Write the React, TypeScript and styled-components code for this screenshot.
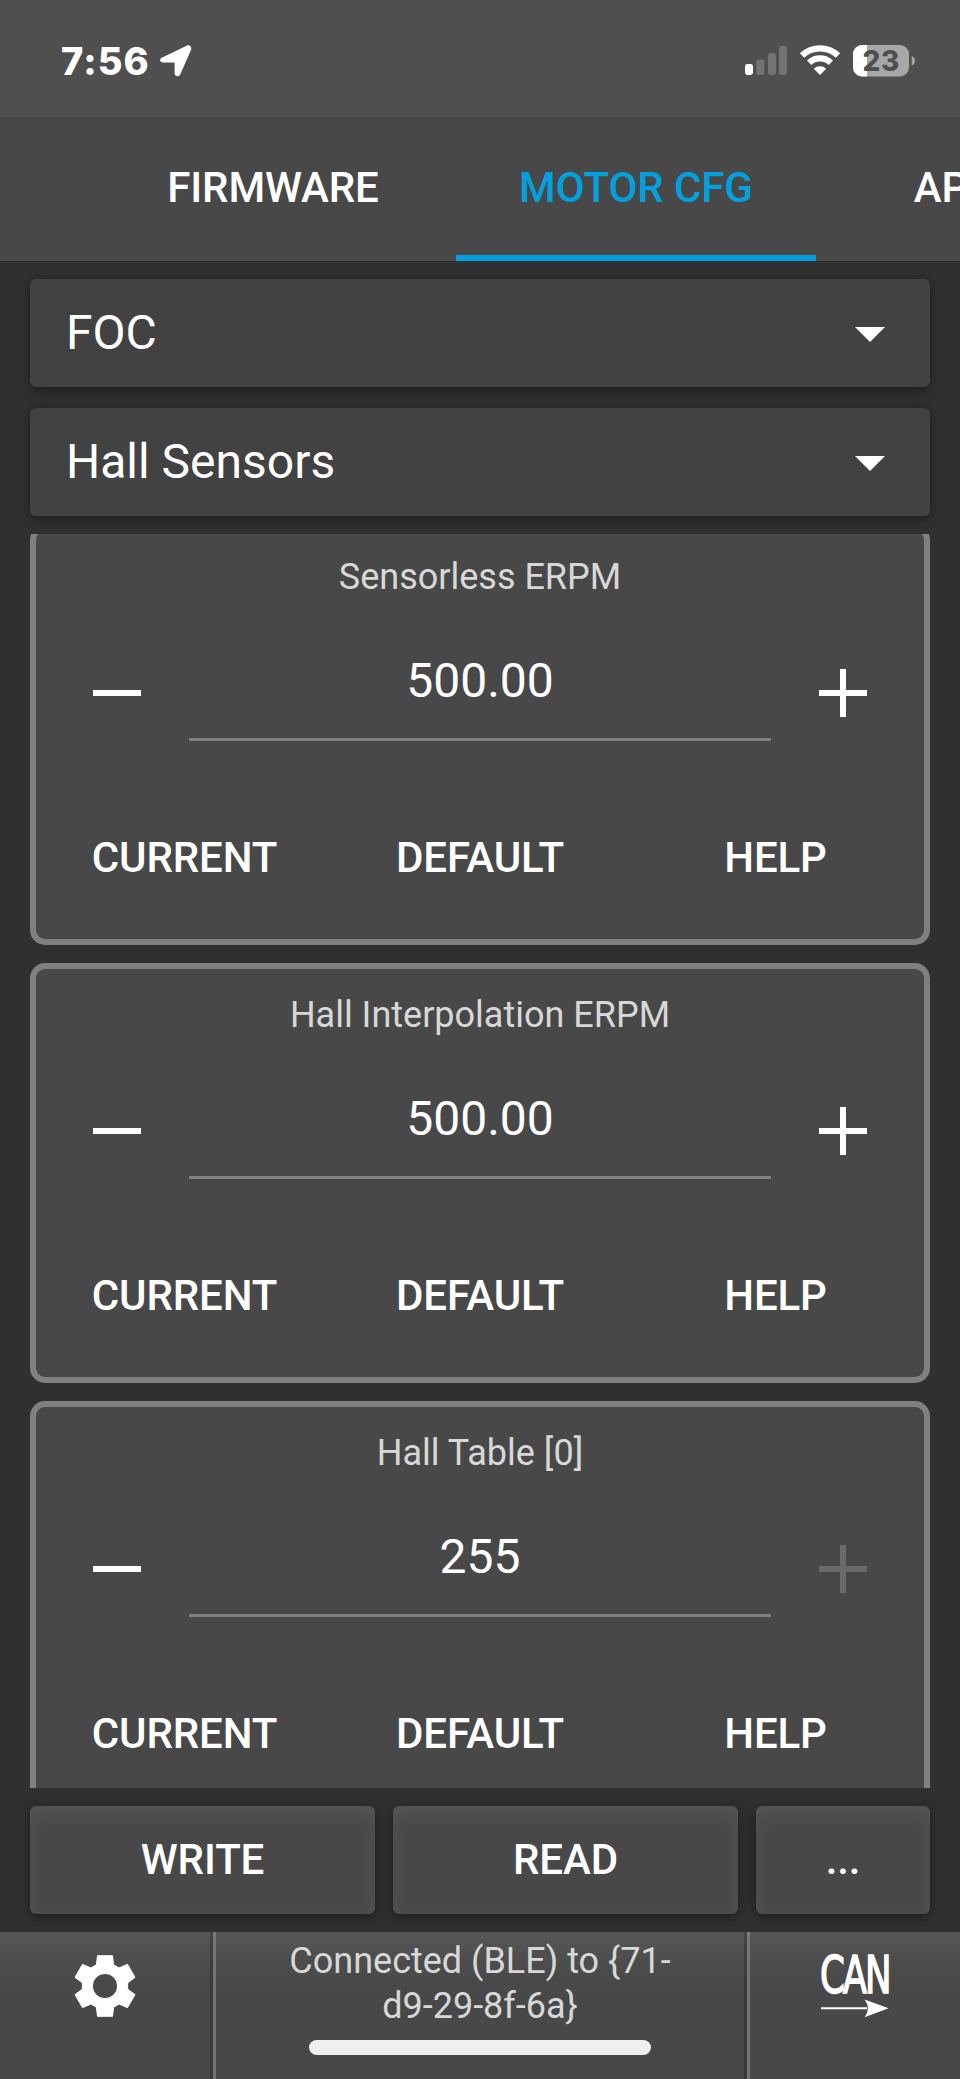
import React from "react";
import styled, { createGlobalStyle, css } from "styled-components";

const Global = createGlobalStyle`
  * { box-sizing: border-box; }
  html, body { margin: 0; padding: 0; background: #303030; }
  button { font: inherit; color: inherit; border: 0; background: none; padding: 0; margin: 0; }
`;

const Screen = styled.div`
  width: 960px;
  height: 2079px;
  display: flex;
  flex-direction: column;
  overflow: hidden;
  background: #303030;
  color: #fff;
  font-family: Roboto, "Liberation Sans", sans-serif;
`;

const StatusBar = styled.header`
  flex: none;
  height: 117px;
  display: flex;
  align-items: flex-start;
  justify-content: space-between;
  background: #4f4f4f;
  padding: 42px 44px 0 61px;
`;

const StatusLeft = styled.div`
  display: flex;
  align-items: flex-start;
  gap: 10px;
`;

const Clock = styled.span`
  font: 800 38px/38px Inter, sans-serif;
  letter-spacing: 1.1px;
`;

const StatusRight = styled.div`
  display: flex;
  align-items: flex-start;
  gap: 13px;
  padding-top: 3px;
`;

const Tabs = styled.nav`
  flex: none;
  height: 144px;
  display: flex;
  gap: 3px;
  padding-left: 93px;
  background: #484848;
`;

const Tab = styled.button<{ $active?: boolean }>`
  flex: none;
  width: 360px;
  height: 144px;
  font-weight: 500;
  font-size: 42px;
  line-height: 49px;
  letter-spacing: -0.1px;
  padding-bottom: 3px;
  white-space: nowrap;
  ${(p) =>
    p.$active &&
    css`
      color: #03a0df;
      border-bottom: 6px solid #03a0df;
      padding-top: 6px;
    `}
`;

const Selects = styled.section`
  flex: none;
  display: flex;
  flex-direction: column;
  gap: 21px;
  padding: 18px 30px;
`;

const Select = styled.button`
  height: 108px;
  display: flex;
  align-items: center;
  justify-content: space-between;
  padding: 0 45px 0 36px;
  border-radius: 6px;
  background: #424242;
  box-shadow: 0 4px 9px rgba(0, 0, 0, 0.28), 0 0 16px rgba(0, 0, 0, 0.16);
  font-size: 48px;
  line-height: 56px;
`;

const List = styled.main`
  flex: none;
  height: 1254px;
  overflow: hidden;
  padding: 0 30px;
`;

const ListTrack = styled.div`
  margin-top: -9px;
  display: flex;
  flex-direction: column;
  gap: 18px;
`;

const Card = styled.article`
  flex: none;
  height: 420px;
  border: 6px solid #808080;
  border-radius: 15px;
  background: #484848;
  padding: 25px 57px 0;
`;

const CardTitle = styled.h2`
  margin: 0;
  font-weight: 400;
  font-size: 36px;
  line-height: 42px;
  text-align: center;
  color: #d8d8d8;
`;

const Spin = styled.div`
  display: flex;
  justify-content: space-between;
  height: 144px;
  margin-top: 23px;
`;

const StepButton = styled.button<{ $disabled?: boolean }>`
  width: 48px;
  height: 144px;
  display: flex;
  align-items: center;
  color: ${(p) => (p.$disabled ? "#6a6a6a" : "#fff")};
`;

const Value = styled.div`
  width: 582px;
  height: 120px;
  padding-top: 32px;
  border-bottom: 3px solid #808080;
  font-size: 48px;
  line-height: 56px;
  text-align: center;
`;

const Actions = styled.div`
  display: grid;
  grid-template-columns: repeat(3, 279px);
  column-gap: 16.5px;
  margin: 20px -48px 0;
  height: 144px;
`;

const Action = styled.button`
  font-weight: 500;
  font-size: 42px;
  line-height: 49px;
  letter-spacing: -0.1px;
`;

const BottomButtons = styled.section`
  flex: none;
  display: grid;
  grid-template-columns: 345px 345px 174px;
  gap: 18px;
  padding: 18px 30px;
`;

const BigButton = styled.button`
  height: 108px;
  border-radius: 6px;
  background: #484848;
  font-weight: 500;
  font-size: 42px;
  line-height: 49px;
  letter-spacing: -0.1px;
  padding-bottom: 1px;
  box-shadow:
    inset 0 7px 18px rgba(255, 255, 255, 0.08),
    0 4px 9px rgba(0, 0, 0, 0.28),
    0 0 16px rgba(0, 0, 0, 0.16);
`;

const Footer = styled.footer`
  position: relative;
  flex: none;
  height: 147px;
  display: grid;
  grid-template-columns: 216px 534px 210px;
  background: linear-gradient(#575757 0, #4e4e4e 24px, #494949 50px, #484848 75px);
`;

const FooterCell = styled.div<{ $divided?: boolean }>`
  display: flex;
  justify-content: center;
  ${(p) =>
    p.$divided &&
    css`
      border-right: 3px solid rgba(160, 160, 160, 0.48);
      box-shadow: inset -3px 0 0 rgba(0, 0, 0, 0.2);
      padding-right: 3px;
    `}
`;

const Connection = styled.p`
  margin: 7px 0 0;
  width: 410px;
  font-size: 36px;
  line-height: 45px;
  text-align: center;
  color: #d8d8d8;
`;

const HomeIndicator = styled.div`
  position: absolute;
  left: 309px;
  bottom: 24px;
  width: 342px;
  height: 15px;
  border-radius: 8px;
  background: #efefef;
`;

const Glyph = styled.svg<{ $top?: number }>`
  display: block;
  flex: none;
  overflow: visible;
  margin-top: ${(p) => p.$top ?? 0}px;
`;

const LocationIcon = () => (
  <Glyph width="32" height="32" viewBox="0 0 32 32" $top={3}>
    <path
      d="M2.300 12.600 26.600.7c2.900-1.300 5.600 1.300 4.400 4.200L20.200 29.400c-1.200 2.700-5.600 2.300-5.600-1.200V18.400c0-.5-.3-.8-.8-.8H3.500c-4 0-4.500-3.800-1.200-5z"
      fill="#fff"
    />
  </Glyph>
);

const SignalIcon = () => (
  <Glyph width="42" height="29" viewBox="0 0 42 29" $top={1}>
    <rect x="0" y="18" width="8" height="11" rx="2.4" fill="#fff" />
    <rect x="11.3" y="13.5" width="8" height="15.5" rx="2.4" fill="#737373" />
    <rect x="23" y="7" width="8" height="22" rx="2.4" fill="#737373" />
    <rect x="34" y="0" width="8" height="29" rx="2.4" fill="#737373" />
  </Glyph>
);

const WifiIcon = () => (
  <Glyph width="40" height="30" viewBox="0 0 40 30">
    <g fill="none" stroke="#fff" strokeWidth="6.2">
      <path d="M2 10.6a26 26 0 0 1 36 0" />
      <path d="M9.1 17.7a16 16 0 0 1 21.8 0" />
    </g>
    <path d="M20 30l-6.200-6.200a9 9 0 0 1 12.400 0z" fill="#fff" />
  </Glyph>
);

const BatteryIcon = () => (
  <Glyph width="63" height="32" viewBox="0 0 63 32">
    <defs>
      <clipPath id="cell">
        <rect width="56" height="31.5" rx="9" />
      </clipPath>
    </defs>
    <g clipPath="url(#cell)">
      <rect width="56" height="32" fill="#a7a7a7" />
      <rect width="14" height="32" fill="#fff" />
    </g>
    <path d="M58.7 11c4.400 1.600 4.400 8 0 9.600z" fill="#a7a7a7" />
    <text
      x="28"
      y="25.7"
      textAnchor="middle"
      fill="#4f4f4f"
      fontFamily="Inter, sans-serif"
      fontWeight="800"
      fontSize="28"
      textLength="37"
    >
      23
    </text>
  </Glyph>
);

const CaretIcon = () => (
  <Glyph width="30" height="15" viewBox="0 0 30 15" $top={2}>
    <path d="M0 0h30L15 15z" fill="#fff" />
  </Glyph>
);

const MinusIcon = () => (
  <Glyph width="48" height="48" viewBox="0 0 48 48">
    <path d="M0 21h48v6H0z" fill="currentColor" />
  </Glyph>
);

const PlusIcon = () => (
  <Glyph width="48" height="48" viewBox="0 0 48 48">
    <path d="M0 21h21V0h6v21h21v6H27v21h-6V27H0z" fill="currentColor" />
  </Glyph>
);

// One gear tooth, centred on the axis; the outline repeats it every 60 degrees.
const tooth = [
  [-8.6, -21.2],
  [-7.5, -30.3],
  [7.5, -30.3],
  [8.6, -21.2],
];

const gearOutline = [0, 1, 2, 3, 4, 5]
  .flatMap((n) => {
    const a = (n * Math.PI) / 3;
    return tooth.map(([x, y]) => {
      const px = x * Math.cos(a) - y * Math.sin(a);
      const py = x * Math.sin(a) + y * Math.cos(a);
      return `${px.toFixed(2)} ${py.toFixed(2)}`;
    });
  })
  .join("L");

const GearIcon = () => (
  <Glyph width="62" height="62" viewBox="-31 -31 62 62" $top={23}>
    <path
      fillRule="evenodd"
      fill="#fff"
      stroke="#fff"
      strokeWidth="1"
      strokeLinejoin="round"
      d={`M${gearOutline}ZM0 -12.6a12.6 12.6 0 1 0 0 25.2a12.6 12.6 0 0 0 0 -25.2Z`}
    />
  </Glyph>
);

const CanIcon = () => (
  <Glyph width="70" height="64" viewBox="0 0 70 64" $top={22}>
    <text
      transform="translate(0 39.2) scale(0.69 1)"
      fill="#fff"
      stroke="#fff"
      strokeWidth="1.6"
      fontFamily="'DejaVu Sans', sans-serif"
      fontSize="51.5"
      letterSpacing="-2.9"
    >
      CAN
    </text>
    <path d="M1 53.3h46v2H1z" fill="#fff" />
    <path d="M44.5 45.500l24.200 8.800-24.200 8.900q7-8.900 0-17.700z" fill="#fff" />
  </Glyph>
);

const settings = [
  { title: "Sensorless ERPM", value: "500.00", atMax: false },
  { title: "Hall Interpolation ERPM", value: "500.00", atMax: false },
  { title: "Hall Table [0]", value: "255", atMax: true },
];

const connection = "Connected (BLE) to {71-d9-29-8f-6a}";

export default function App() {
  return (
    <Screen>
      <Global />
      <StatusBar>
        <StatusLeft>
          <Clock>7:56</Clock>
          <LocationIcon />
        </StatusLeft>
        <StatusRight>
          <SignalIcon />
          <WifiIcon />
          <BatteryIcon />
        </StatusRight>
      </StatusBar>
      <Tabs>
        <Tab>FIRMWARE</Tab>
        <Tab $active>MOTOR CFG</Tab>
        <Tab>APP CFG</Tab>
      </Tabs>
      <Selects>
        {["FOC", "Hall Sensors"].map((label) => (
          <Select key={label}>
            {label}
            <CaretIcon />
          </Select>
        ))}
      </Selects>
      <List>
        <ListTrack>
          {settings.map((s) => (
            <Card key={s.title}>
              <CardTitle>{s.title}</CardTitle>
              <Spin>
                <StepButton aria-label="Decrease">
                  <MinusIcon />
                </StepButton>
                <Value>{s.value}</Value>
                <StepButton aria-label="Increase" $disabled={s.atMax}>
                  <PlusIcon />
                </StepButton>
              </Spin>
              <Actions>
                <Action>CURRENT</Action>
                <Action>DEFAULT</Action>
                <Action>HELP</Action>
              </Actions>
            </Card>
          ))}
        </ListTrack>
      </List>
      <BottomButtons>
        <BigButton>WRITE</BigButton>
        <BigButton>READ</BigButton>
        <BigButton>...</BigButton>
      </BottomButtons>
      <Footer>
        <FooterCell $divided>
          <GearIcon />
        </FooterCell>
        <FooterCell $divided>
          <Connection>{connection}</Connection>
        </FooterCell>
        <FooterCell>
          <CanIcon />
        </FooterCell>
        <HomeIndicator />
      </Footer>
    </Screen>
  );
}
